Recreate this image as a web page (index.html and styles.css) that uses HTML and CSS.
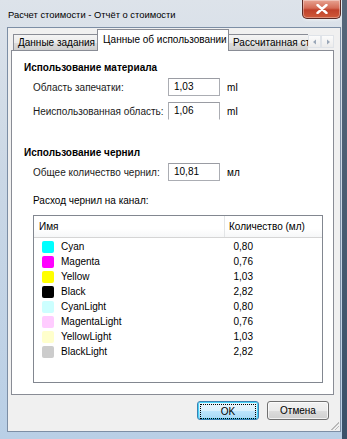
FILE: index.html
```html
<!DOCTYPE html>
<html lang="ru">
<head>
  <meta charset="UTF-8" />
  <title>Расчет стоимости</title>
  <link rel="stylesheet" href="styles.css">
</head>
<body>
  <div class="window">
    <!-- Title bar -->
    <div class="titlebar">
      <span class="title">Расчет стоимости - Отчёт о стоимости</span>
      <button class="close-btn">
        <svg width="12" height="10" viewBox="0 0 12 10">
          <path d="M1.5 1 L10.5 9 M10.5 1 L1.5 9" stroke="#fff" stroke-width="2.4" stroke-linecap="round" fill="none"/>
        </svg>
      </button>
    </div>

    <div class="client">
      <!-- Tabs -->
      <div class="tabs">
        <div class="tab">Данные задания</div>
        <div class="tab active">Цанные об использовании</div>
        <div class="tab clipped">Рассчитанная ст</div>
        <div class="tab-arrows">
          <span class="arrow"><svg width="6" height="6" viewBox="0 0 6 6"><path d="M4 0.5 L1 3 L4 5.5 Z" fill="#9aa7b8"/></svg></span>
          <span class="arrow"><svg width="6" height="6" viewBox="0 0 6 6"><path d="M2 0.5 L5 3 L2 5.5 Z" fill="#9aa7b8"/></svg></span>
        </div>
      </div>

      <!-- Tab panel -->
      <div class="panel">
        <div class="heading">Использование материала</div>
        <div class="field first">
          <span class="label">Область запечатки:</span>
          <span class="input">1,03</span>
          <span class="unit">mI</span>
        </div>
        <div class="field">
          <span class="label">Неиспользованная область:</span>
          <span class="input cut">1,06</span>
          <span class="unit">mI</span>
        </div>

        <div class="heading second">Использование чернил</div>
        <div class="field first">
          <span class="label">Общее количество чернил:</span>
          <span class="input">10,81</span>
          <span class="unit">мл</span>
        </div>
        <div class="caption">Расход чернил на канал:</div>

        <div class="listbox">
          <div class="list-header">
            <span class="col-name">Имя</span>
            <span class="col-qty">Количество (мл)</span>
          </div>
          <div class="list-body">
            <div class="list-row"><span class="swatch" style="background:#00ffff"></span><span class="name">Cyan</span><span class="qty">0,80</span></div>
            <div class="list-row"><span class="swatch" style="background:#ff00ff"></span><span class="name">Magenta</span><span class="qty">0,76</span></div>
            <div class="list-row"><span class="swatch" style="background:#ffff00"></span><span class="name">Yellow</span><span class="qty">1,03</span></div>
            <div class="list-row"><span class="swatch" style="background:#000000"></span><span class="name">Black</span><span class="qty">2,82</span></div>
            <div class="list-row"><span class="swatch" style="background:#ccffff"></span><span class="name">CyanLight</span><span class="qty">0,80</span></div>
            <div class="list-row"><span class="swatch" style="background:#ffccff"></span><span class="name">MagentaLight</span><span class="qty">0,76</span></div>
            <div class="list-row"><span class="swatch" style="background:#ffffcc"></span><span class="name">YellowLight</span><span class="qty">1,03</span></div>
            <div class="list-row"><span class="swatch" style="background:#cccccc"></span><span class="name">BlackLight</span><span class="qty">2,82</span></div>
          </div>
        </div>
      </div>

      <!-- Dialog buttons -->
      <div class="buttons">
        <button class="btn default"><span>OK</span></button>
        <button class="btn">Отмена</button>
      </div>
      <div class="grip"></div>
    </div>
  </div>
</body>
</html>
```

FILE: styles.css
```css
body {
  margin: 0;
  padding: 0;
  font-family: 'Liberation Sans', Arial, sans-serif;
  font-size: 10px;
  color: #000;
  background: #3f5570;
}

.window {
  width: 347px;
  height: 439px;
  box-sizing: border-box;
  padding: 0 6px 7px 7px;
  background: linear-gradient(180deg, #dde3ea 0%, #cad7e5 40%, #b9cfe6 100%);
  display: flex;
  flex-direction: column;
  position: relative;
}

.window::after {
  content: "";
  position: absolute;
  top: 0;
  right: 0;
  width: 5px;
  height: 100%;
  background: linear-gradient(180deg, #56677a, #3a5169);
}

.titlebar {
  height: 27px;
  display: flex;
  justify-content: space-between;
  align-items: flex-start;
}

.title {
  font-size: 9.4px;
  margin-top: 9px;
  margin-left: 1px;
}

.close-btn {
  width: 39px;
  height: 19px;
  border: 1px solid #5b2a25;
  border-top: none;
  border-radius: 0 0 5px 5px;
  background: linear-gradient(180deg, #e8a493 0%, #d46b55 45%, #c0412a 55%, #cf5a3a 100%);
  box-shadow: inset 0 0 0 1px rgba(255, 255, 255, 0.35), 0 1px 3px rgba(255, 255, 255, 0.6);
  display: flex;
  align-items: center;
  justify-content: center;
  padding: 0;
}

.client {
  flex: 1;
  background: #f0f0f0;
  border: 1px solid #7c8ea5;
  display: flex;
  flex-direction: column;
  position: relative;
}

/* tabs */
.tabs {
  height: 23px;
  display: flex;
  align-items: flex-end;
  padding-left: 5px;
  margin-bottom: -1px;
  position: relative;
  z-index: 1;
}

.tab {
  height: 17px;
  line-height: 16px;
  box-sizing: border-box;
  padding: 0 4px;
  border: 1px solid #898c95;
  border-right: none;
  background: linear-gradient(180deg, #f4f4f4 0%, #ebebeb 50%, #dddddd 51%, #cfcfcf 100%);
  white-space: nowrap;
}

.tab:first-child {
  width: 84px;
}

.tab.active {
  height: 22px;
  line-height: 19px;
  padding: 0 5px;
  background: #fff;
  border-right: 1px solid #898c95;
  border-bottom: none;
  width: 132px;
}

.tab.active + .tab {
  border-left: none;
}

.tab.clipped {
  width: 79px;
  overflow: hidden;
}

.tab-arrows {
  display: flex;
  align-self: flex-start;
  margin-top: 7px;
}

.arrow {
  width: 13px;
  height: 13px;
  box-sizing: border-box;
  border: 1px solid #dfe3e8;
  background: linear-gradient(180deg, #fbfbfb, #ececec);
  display: flex;
  align-items: center;
  justify-content: center;
}

/* panel */
.panel {
  margin: 0 6px 0 3px;
  height: 345px;
  box-sizing: border-box;
  background: #fff;
  border: 1px solid #898c95;
  padding: 9px 11px 0 12px;
}

.heading {
  font-weight: bold;
  height: 16px;
  line-height: 16px;
}

.heading.second {
  margin-top: 25px;
}

.field {
  display: flex;
  align-items: center;
  height: 18px;
  margin-top: 6px;
  padding-left: 9px;
}

.field.first {
  margin-top: 2px;
}

.label {
  width: 135px;
  color: #1a1a1a;
  white-space: nowrap;
}

.input {
  width: 52px;
  height: 18px;
  box-sizing: border-box;
  border: 1px solid #abadb3;
  border-top-color: #9a9ca3;
  padding-left: 5px;
  line-height: 16px;
}

.input.cut {
  border-bottom-color: transparent;
}

.unit {
  margin-left: 7px;
}

.caption {
  margin-top: 12px;
  padding-left: 9px;
  height: 16px;
  line-height: 16px;
}

/* list */
.listbox {
  margin: 6px 0 0 9px;
  width: 290px;
  height: 168px;
  box-sizing: border-box;
  border: 1px solid #828790;
}

.list-header {
  display: flex;
  height: 21px;
  line-height: 21px;
  border-bottom: 1px solid #d5d5d5;
  background: linear-gradient(180deg, #fff 0%, #fff 60%, #f6f7f8 100%);
}

.col-name {
  width: 191px;
  padding-left: 5px;
  box-sizing: border-box;
  border-right: 1px solid #e3e5e7;
}

.col-qty {
  padding-left: 4px;
  flex: 1;
}

.list-body {
  padding-top: 1px;
}

.list-row {
  display: flex;
  align-items: center;
  height: 15px;
  padding-left: 8px;
}

.swatch {
  width: 12px;
  height: 12px;
  border-radius: 2px;
}

.name {
  margin-left: 7px;
  width: 165px;
}

.qty {
  width: 27px;
  text-align: right;
}

/* buttons */
.buttons {
  display: flex;
  justify-content: flex-end;
  gap: 8px;
  margin-top: 6px;
  padding-right: 11px;
}

.btn {
  width: 62px;
  height: 19px;
  font-family: inherit;
  font-size: 10px;
  padding: 0;
  border: 1px solid #707070;
  border-radius: 3px;
  background: linear-gradient(180deg, #f2f2f2 0%, #ebebeb 50%, #dddddd 51%, #cfcfcf 100%);
  box-shadow: inset 0 0 0 1px rgba(255, 255, 255, 0.7);
  color: #000;
}

.btn.default {
  border-color: #3c7fb1;
  background: linear-gradient(180deg, #eaf6fd 0%, #d9f0fc 50%, #bee6fd 51%, #a7d9f5 100%);
  box-shadow: inset 0 0 0 1px #48d4f8;
}

.btn.default span {
  display: flex;
  align-items: center;
  justify-content: center;
  margin: 2px;
  height: 13px;
  border: 1px dotted #000;
}

.grip {
  position: absolute;
  right: 1px;
  bottom: 1px;
  width: 8px;
  height: 8px;
  background: linear-gradient(135deg, transparent 50%, #b8b8b8 50%, #b8b8b8 58%, transparent 58%, transparent 70%, #b8b8b8 70%, #b8b8b8 78%, transparent 78%);
}
```
